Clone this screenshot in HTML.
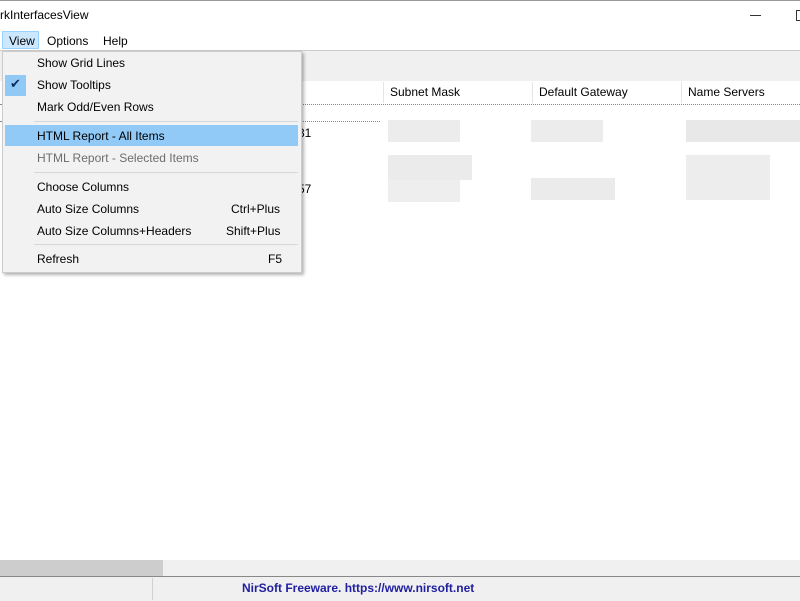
<!DOCTYPE html>
<html><head><style>
body{margin:0;width:800px;height:600px;overflow:hidden;background:#fff;font-family:"Liberation Sans",sans-serif;font-size:12px;color:#000;position:relative}
.a{position:absolute}
.mi{position:absolute;left:35px;font-size:12px}
.b{position:absolute;background:#e6e6e6}
</style></head><body>
<div class="a" style="left:0;top:0;width:800px;height:1px;background:#999"></div>
<div class="a" style="left:0;top:8px;font-size:12px">rkInterfacesView</div>
<div class="a" style="left:750px;top:15px;width:11px;height:1px;background:#333"></div>
<div class="a" style="left:796px;top:10px;width:8px;height:9px;border:1px solid #333"></div>
<div class="a" style="left:2px;top:31px;width:37px;height:18px;background:#cce8ff;border:1px solid #99d1ff;box-sizing:border-box"></div>
<div class="a" style="left:9px;top:34px">View</div>
<div class="a" style="left:47px;top:34px">Options</div>
<div class="a" style="left:103px;top:34px">Help</div>
<div class="a" style="left:0;top:50px;width:800px;height:30px;background:#f0f0f0;border-top:1px solid #ccc;border-bottom:1px solid #a0a0a0"></div>
<div class="a" style="left:0;top:81px;width:800px;height:22px;background:#fff"></div>
<div class="a" style="left:383px;top:82px;width:1px;height:21px;background:#e5e5e5"></div>
<div class="a" style="left:532px;top:82px;width:1px;height:21px;background:#e5e5e5"></div>
<div class="a" style="left:681px;top:82px;width:1px;height:21px;background:#e5e5e5"></div>
<div class="a" style="left:390px;top:85px">Subnet Mask</div>
<div class="a" style="left:539px;top:85px">Default Gateway</div>
<div class="a" style="left:688px;top:85px">Name Servers</div>
<div class="a" style="left:0;top:104px;width:800px;border-top:1px dotted #888"></div>
<div class="a" style="left:0;top:121px;width:380px;border-top:1px dotted #888"></div>
<div class="a" style="left:298px;top:126px">31</div>
<div class="a" style="left:298px;top:182px">57</div>
<div class="b" style="left:388px;top:120px;width:72px;height:22px;background:#ececec"></div>
<div class="b" style="left:531px;top:120px;width:72px;height:22px;background:#ececec"></div>
<div class="b" style="left:686px;top:120px;width:114px;height:22px;background:#e8e8e8"></div>
<div class="b" style="left:388px;top:155px;width:84px;height:25px;background:#ebebeb"></div>
<div class="b" style="left:388px;top:180px;width:72px;height:22px;background:#eeeeee"></div>
<div class="b" style="left:531px;top:178px;width:84px;height:22px;background:#ebebeb"></div>
<div class="b" style="left:686px;top:155px;width:84px;height:45px;background:#ededed"></div>
<div class="a" style="left:2px;top:51px;width:300px;height:222px;background:#f2f2f2;border:1px solid #ccc;box-sizing:border-box;box-shadow:2px 2px 3px rgba(0,0,0,.3)"></div>
<div class="mi" style="left:37px;top:56px">Show Grid Lines</div>
<div class="a" style="left:5px;top:75px;width:21px;height:21px;background:#90c8f6"></div>
<div class="a" style="left:10px;top:76px;font-size:13px;color:#0a2c5c">✔</div>
<div class="mi" style="left:37px;top:78px">Show Tooltips</div>
<div class="mi" style="left:37px;top:100px">Mark Odd/Even Rows</div>
<div class="a" style="left:34px;top:121px;width:264px;height:1px;background:#d7d7d7"></div>
<div class="a" style="left:5px;top:125px;width:293px;height:21px;background:#91c9f7"></div>
<div class="mi" style="left:37px;top:129px">HTML Report - All Items</div>
<div class="mi" style="left:37px;top:151px;color:#6d6d6d">HTML Report - Selected Items</div>
<div class="a" style="left:34px;top:172px;width:264px;height:1px;background:#d7d7d7"></div>
<div class="mi" style="left:37px;top:180px">Choose Columns</div>
<div class="mi" style="left:37px;top:202px">Auto Size Columns</div>
<div class="a" style="left:231px;top:202px">Ctrl+Plus</div>
<div class="mi" style="left:37px;top:224px">Auto Size Columns+Headers</div>
<div class="a" style="left:226px;top:224px">Shift+Plus</div>
<div class="a" style="left:34px;top:244px;width:264px;height:1px;background:#d7d7d7"></div>
<div class="mi" style="left:37px;top:252px">Refresh</div>
<div class="a" style="left:268px;top:252px">F5</div>
<div class="a" style="left:0;top:560px;width:800px;height:16px;background:#f0f0f0"></div>
<div class="a" style="left:0;top:560px;width:163px;height:16px;background:#cdcdcd"></div>
<div class="a" style="left:0;top:576px;width:800px;height:24px;background:#f0f0f0;border-top:1px solid #888"></div>
<div class="a" style="left:152px;top:578px;width:1px;height:22px;background:#d0d0d0"></div>
<div class="a" style="left:242px;top:581px;font-weight:bold;color:#2020a0;font-size:12px">NirSoft Freeware. https://www.nirsoft.net</div>
</body></html>
